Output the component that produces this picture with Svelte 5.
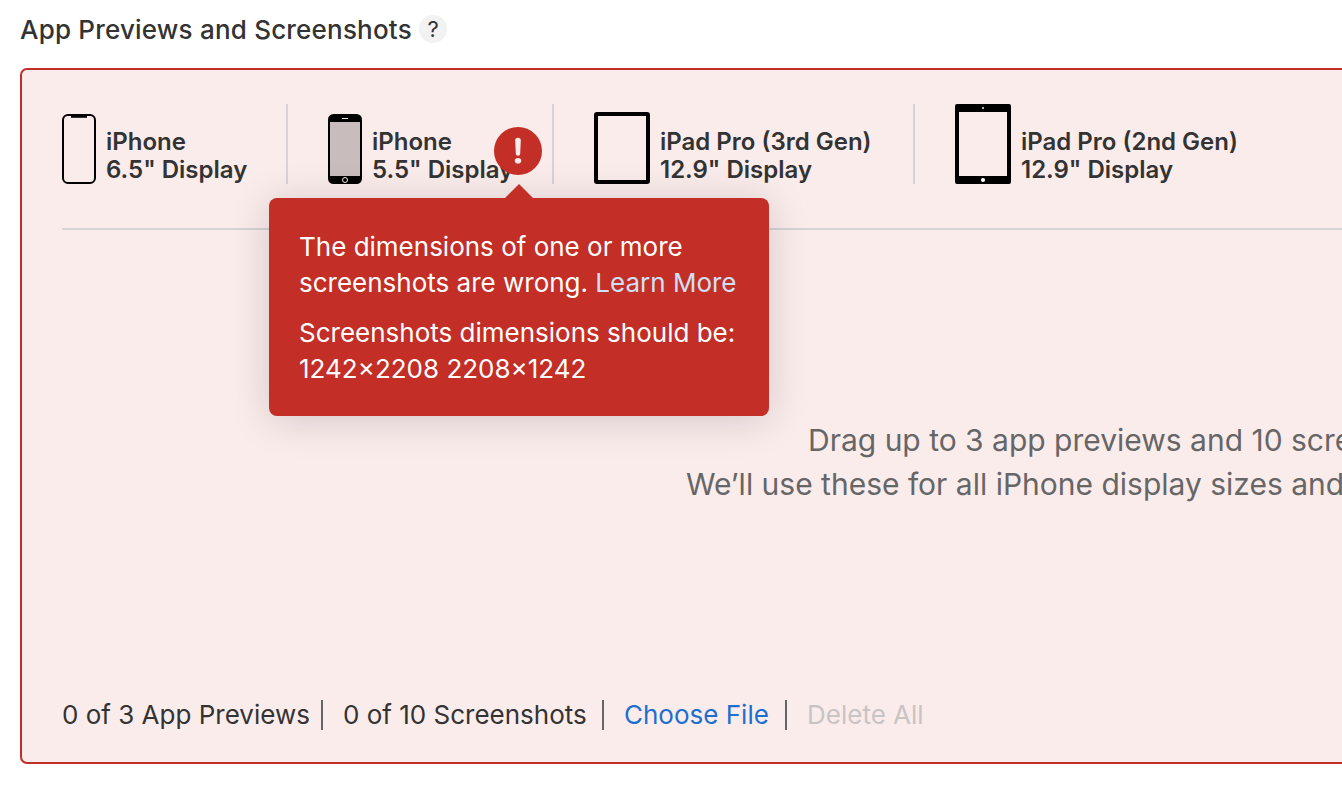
<script>
  const tabs = [
    { icon: 'x', name: 'iPhone', size: '6.5" Display', width: 226 },
    { icon: 'home', name: 'iPhone', size: '5.5" Display', width: 266, active: true },
    { icon: 'pad3', name: 'iPad Pro (3rd Gen)', size: '12.9" Display', width: 361 },
    { icon: 'pad2', name: 'iPad Pro (2nd Gen)', size: '12.9" Display', width: 400 }
  ];
</script>

<div class="page">
  <header>
    <h1>App Previews and Screenshots</h1>
    <span class="help">?</span>
  </header>

  <section class="panel">
    <div class="tabs">
      {#each tabs as tab}
        <div class="tab" style="width: {tab.width}px">
          {#if tab.icon === 'x'}
            <svg width="34" height="70" viewBox="0 0 34 70">
              <rect x="1" y="1" width="32" height="68" rx="5" fill="none" stroke="#000" stroke-width="2" />
              <path d="M9 1h16v2.8H9z" />
            </svg>
          {:else if tab.icon === 'home'}
            <svg width="34" height="70" viewBox="0 0 34 70">
              <rect width="34" height="70" rx="5.5" />
              <path d="M2 8h30v54H2z" fill="#c8bdbc" />
              <path d="M14 4h6v1h-6z" fill="#fbecec" />
              <circle cx="17" cy="66" r="2.5" fill="none" stroke="#fbecec" stroke-width="1" />
            </svg>
          {:else if tab.icon === 'pad3'}
            <svg width="56" height="72" viewBox="0 0 56 72">
              <rect x="2" y="2" width="52" height="68" rx="1" fill="none" stroke="#000" stroke-width="4" />
            </svg>
          {:else}
            <svg width="56" height="80" viewBox="0 0 56 80">
              <path fill-rule="evenodd" d="M2 0h52a2 2 0 0 1 2 2v76a2 2 0 0 1-2 2H2a2 2 0 0 1-2-2V2a2 2 0 0 1 2-2zM4 8v64h48V8z" />
              <circle cx="28" cy="4" r="1" fill="#fbecec" />
              <circle cx="28" cy="76" r="2.1" fill="#fff" />
            </svg>
          {/if}
          <div class="label"><span>{tab.name}</span><span>{tab.size}</span></div>
          {#if tab.active}
            <svg class="alert" width="48" height="48" viewBox="0 0 48 48">
              <circle cx="24" cy="24" r="24" fill="#c32e26" />
              <path d="M21.2 13.5a2.8 2.8 0 0 1 5.6 0l-.6 13a2.2 2.2 0 0 1-4.4 0z" fill="#fbecec" />
              <ellipse cx="24" cy="33.8" rx="3.2" ry="2.8" fill="#fbecec" />
            </svg>
            <div class="tip">
              <svg class="arrow" width="28" height="15" viewBox="0 0 28 15"><path d="M0 15V14L14 0L28 14V15z" fill="#c32e26" /></svg>
              <p><span class="l1">The dimensions of one or more</span><br /><span class="l2">screenshots are wrong. <a>Learn More</a></span></p>
              <p><span class="l3">Screenshots dimensions should be:</span><br /><span class="l4">1242x2208 2208x1242</span></p>
            </div>
          {/if}
        </div>
      {/each}
    </div>

    <div class="drop">
      <p class="drag">Drag up to 3 app previews and 10 screenshots here.</p>
      <p class="use">We’ll use these for all iPhone display sizes and localizations you select.</p>
    </div>

    <footer>
      <span class="f1">0 of 3 App Previews</span>
      <span class="f2">0 of 10 Screenshots</span>
      <span class="f3">Choose File</span>
      <span class="f4">Delete All</span>
    </footer>
  </section>
</div>

<style>
  :global(body) { background: #fff; }
  .page {
    width: 1342px; height: 804px; overflow: hidden; box-sizing: border-box;
    font-family: Inter, "Liberation Sans", sans-serif; color: #333; font-size: 26px; white-space: nowrap;
  }
  header { display: flex; align-items: center; height: 58px; padding-left: 20px; margin-bottom: 10px; }
  h1 { margin: 0; width: 399px; font-size: 26px; font-weight: 500; letter-spacing: 0.2px; }
  .help { width: 28px; height: 28px; border-radius: 50%; background: #f2f2f2; text-align: center; font-size: 22px; line-height: 28px; }
  .panel {
    margin-left: 20px; width: 1400px; height: 696px; box-sizing: border-box; padding: 34px 40px 0;
    border: 2px solid #c32e26; border-radius: 7px; background: #fbecec; display: flex; flex-direction: column;
  }
  .tabs { display: flex; height: 124px; border-bottom: 2px solid #d5d3d3; }
  .tab { position: relative; flex: none; height: 80px; box-sizing: border-box; display: flex; align-items: flex-end; gap: 10px; }
  .tab:not(:first-child) { padding-left: 40px; }
  .tab:not(:last-child) { border-right: 2px solid #d5d3d3; }
  svg { display: block; flex: none; }
  .label { display: flex; flex-direction: column; font-size: 24px; font-weight: 600; line-height: 28px; }
  .alert { position: absolute; left: 206px; top: 23px; z-index: 2; }
  .tip {
    position: absolute; left: -19px; top: 94px; z-index: 1; width: 500px; height: 218px; box-sizing: border-box;
    padding: 31px 30px; border-radius: 8px; background: #c32e26; color: #fff; line-height: 36px;
    box-shadow: 0 4px 40px rgba(0, 0, 0, 0.16);
  }
  .arrow { position: absolute; left: 236px; top: -14px; }
  .tip p { margin: 0 0 14px; }
  .tip a { color: #d0e0f8; }
  .drop { margin-top: 188px; font-size: 30px; line-height: 44px; color: #666; }
  .drop p { margin: 0; }
  .drag { padding-left: 746px; }
  .use { padding-left: 624px; }
  footer { display: flex; margin-top: 194px; line-height: 30px; }
  footer span + span { border-left: 2px solid #666; padding-left: 20px; }
  .f1, .f2, .f3, .f4 { box-sizing: border-box; flex: none; }
  .f1 { width: 259px; }
  .f2 { width: 281px; }
  .f3 { width: 183px; color: #1d6fcf; }
  .f4 { color: #c8c4c4; }
</style>
